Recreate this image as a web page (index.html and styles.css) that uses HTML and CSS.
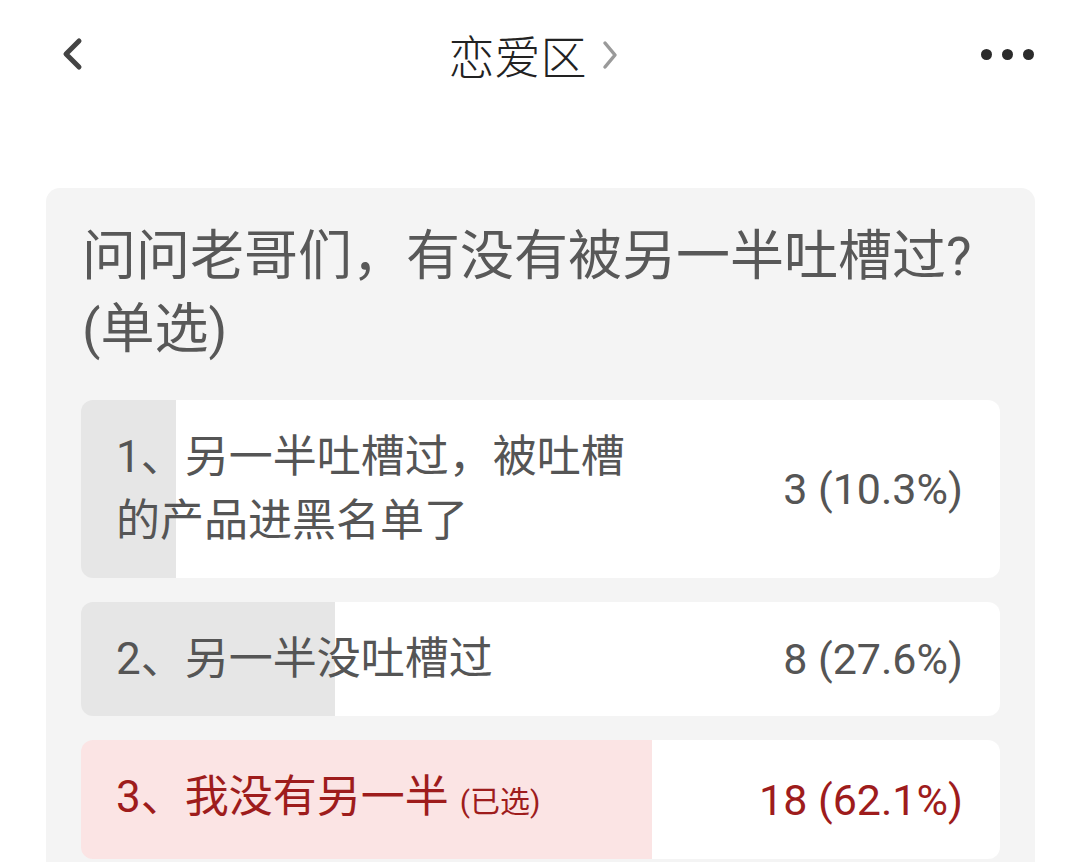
FILE: index.html
```html
<!DOCTYPE html>
<html lang="zh-CN">
<head>
    <meta charset="UTF-8">
    <meta name="viewport" content="width=device-width, initial-scale=1.0">
    <title>恋爱区</title>
    <link rel="stylesheet" href="styles.css">
</head>
<body>

    <header class="nav">
        <svg class="back" width="24" height="34" viewBox="0 0 24 34">
            <path d="M19 4 L6 17 L19 30" fill="none" stroke="#444" stroke-width="5" stroke-linecap="round" stroke-linejoin="round"/>
        </svg>
        <div class="nav-title">
            <span>恋爱区</span>
            <svg width="18" height="30" viewBox="0 0 18 30">
                <path d="M4 3 L14 15 L4 27" fill="none" stroke="#9a9a9a" stroke-width="3.5" stroke-linecap="round" stroke-linejoin="round"/>
            </svg>
        </div>
        <div class="more">
            <span></span><span></span><span></span>
        </div>
    </header>

    <section class="poll">
        <h2 class="question">问问老哥们，有没有被另一半吐槽过?<br>(单选)</h2>

        <div class="option" style="--pct: 10.3%;">
            <div class="label">1、另一半吐槽过，被吐槽的产品进黑名单了</div>
            <div class="count">3 (10.3%)</div>
        </div>
        <div class="option" style="--pct: 27.6%;">
            <div class="label">2、另一半没吐槽过</div>
            <div class="count">8 (27.6%)</div>
        </div>
        <div class="option chosen" style="--pct: 62.1%;">
            <div class="label">3、我没有另一半 <small>(已选)</small></div>
            <div class="count">18 (62.1%)</div>
        </div>
    </section>

</body>
</html>
```

FILE: styles.css
```css
body {
    margin: 0;
    background: #fff;
    font-family: Roboto, "Noto Sans CJK SC", sans-serif;
    color: #555;
}

.nav {
    display: flex;
    align-items: center;
    justify-content: space-between;
    height: 108px;
    padding: 0 46px 0 60px;
}
.back {
    display: block;
}
.nav-title {
    display: flex;
    align-items: center;
    gap: 14px;
    margin-left: 2px;
    font-size: 46px;
    font-weight: 300;
    color: #222;
}
.nav-title svg {
    display: block;
    margin-top: 2px;
}
.more {
    display: flex;
    gap: 10px;
}
.more span {
    width: 11px;
    height: 11px;
    border-radius: 50%;
    background: #2b2b2b;
}

.poll {
    margin: 80px 45px 0 46px;
    padding: 32px 35px 40px;
    background: #f4f4f4;
    border-radius: 14px 14px 0 0;
}
.question {
    margin: 0 0 34px 1px;
    font-size: 54px;
    font-weight: normal;
    line-height: 73px;
    color: #585858;
}

.option {
    display: flex;
    align-items: center;
    padding: 25px 37px 25px 35px;
    margin-bottom: 24px;
    border-radius: 12px;
    background: linear-gradient(to right, #e6e6e6 var(--pct), #fff var(--pct));
    font-size: 44px;
    line-height: 64px;
}
.label {
    max-width: 530px;
}
.count {
    margin-left: auto;
    font-size: 43px;
}
.option.chosen {
    background: linear-gradient(to right, #fbe4e4 var(--pct), #fff var(--pct));
    color: #9e1c1c;
}
.option small {
    font-size: 30px;
}
```
